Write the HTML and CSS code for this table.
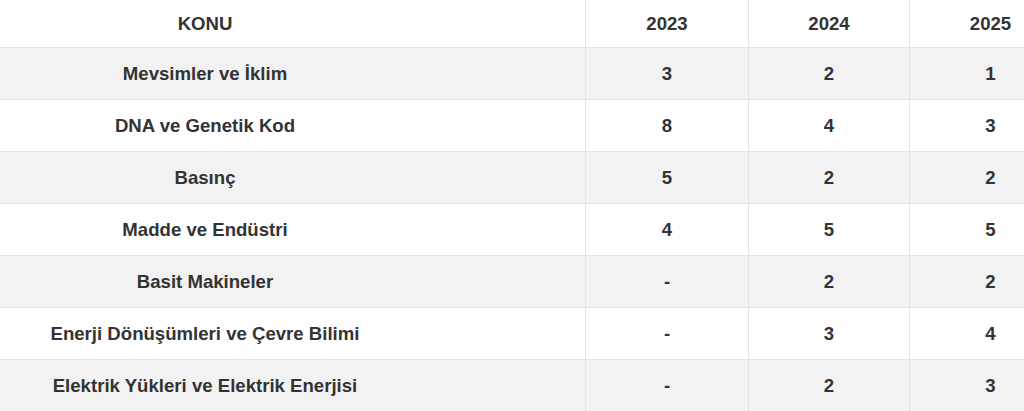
FILE: index.html
```html
<!DOCTYPE html>
<html lang="tr">
<head>
<meta charset="utf-8">
<link rel="stylesheet" href="styles.css">
</head>
<body>
<div class="wrap">
<table class="tbl">
  <thead>
    <tr><th class="topic">KONU</th><th>2023</th><th>2024</th><th>2025</th></tr>
  </thead>
  <tbody>
    <tr><td class="topic">Mevsimler ve İklim</td><td>3</td><td>2</td><td>1</td></tr>
    <tr><td class="topic">DNA ve Genetik Kod</td><td>8</td><td>4</td><td>3</td></tr>
    <tr><td class="topic">Basınç</td><td>5</td><td>2</td><td>2</td></tr>
    <tr><td class="topic">Madde ve Endüstri</td><td>4</td><td>5</td><td>5</td></tr>
    <tr><td class="topic">Basit Makineler</td><td>-</td><td>2</td><td>2</td></tr>
    <tr><td class="topic">Enerji Dönüşümleri ve Çevre Bilimi</td><td>-</td><td>3</td><td>4</td></tr>
    <tr><td class="topic">Elektrik Yükleri ve Elektrik Enerjisi</td><td>-</td><td>2</td><td>3</td></tr>
  </tbody>
</table>
</div>
</body>
</html>
```
FILE: styles.css
```css
html, body {
  margin: 0;
  padding: 0;
  background: #ffffff;
}
.wrap {
  width: 1024px;
  height: 411px;
  overflow: hidden;
}
.tbl {
  border-collapse: collapse;
  table-layout: fixed;
  width: 1072px;
  font-family: "Liberation Sans", Arial, sans-serif;
  font-weight: bold;
  font-size: 18.6px;
  color: #333333;
}
.tbl th, .tbl td {
  text-align: center;
  vertical-align: middle;
  border: 1px solid #e3e3e3;
  padding: 0;
}
.tbl th {
  height: 47px;
  border-top: none;
  font-weight: bold;
}
.tbl td {
  height: 51px;
}
.tbl tr > :first-child {
  border-left: none;
}
.tbl th.topic, .tbl td.topic {
  width: 410px;
  padding-right: 175px;
}
.tbl th:nth-child(2) { width: 162px; }
.tbl th:nth-child(3) { width: 160px; }
.tbl tbody tr:nth-child(odd) td {
  background: #f2f2f2;
}
```
